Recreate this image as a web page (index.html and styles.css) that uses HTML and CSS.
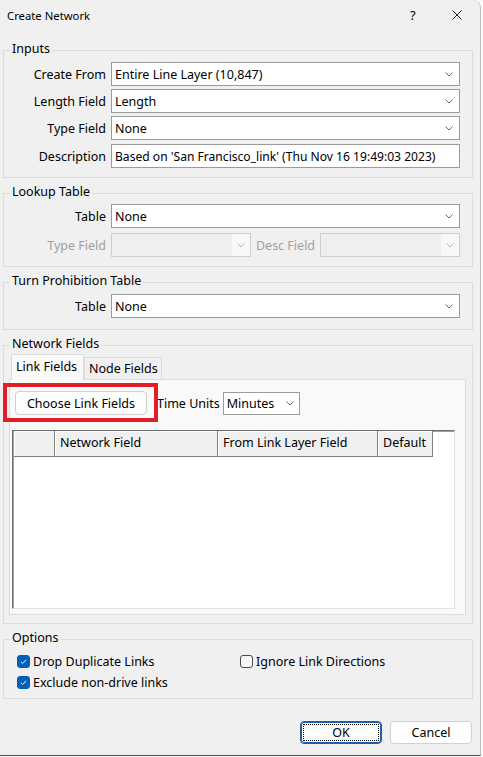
FILE: index.html
```html
<!DOCTYPE html>
<html>
<head>
<meta charset="utf-8">
<title>Create Network</title>
<link rel="stylesheet" href="styles.css">
</head>
<body>
<div class="window">
  <div class="titlebar">
    <span class="title">Create Network</span>
    <span class="help">?</span>
    <span class="close"><svg viewBox="0 0 10 10"><path d="M0.5 0.5 L9.5 9.5 M9.5 0.5 L0.5 9.5"/></svg></span>
  </div>
  <div class="content">
    <fieldset class="group g-inputs">
      <legend>Inputs</legend>
      <div class="form">
        <label>Create From</label>
        <div class="combo"><span class="val">Entire Line Layer (10,847)</span><svg class="chev" viewBox="0 0 8 5"><path d="M0.5 0.5 L4 4 L7.5 0.5"/></svg></div>
        <label>Length Field</label>
        <div class="combo"><span class="val">Length</span><svg class="chev" viewBox="0 0 8 5"><path d="M0.5 0.5 L4 4 L7.5 0.5"/></svg></div>
        <label>Type Field</label>
        <div class="combo"><span class="val">None</span><svg class="chev" viewBox="0 0 8 5"><path d="M0.5 0.5 L4 4 L7.5 0.5"/></svg></div>
        <label class="desc-label">Description</label>
        <div class="textbox desc-box">Based on 'San Francisco_link' (Thu Nov 16 19:49:03 2023)</div>
      </div>
    </fieldset>

    <fieldset class="group g-lookup">
      <legend>Lookup Table</legend>
      <div class="form form-lookup">
        <label>Table</label>
        <div class="combo"><span class="val">None</span><svg class="chev" viewBox="0 0 8 5"><path d="M0.5 0.5 L4 4 L7.5 0.5"/></svg></div>
        <label class="disabled">Type Field</label>
        <div class="split">
          <div class="combo off"><span class="val"></span><span class="arrow"><svg class="chev" viewBox="0 0 8 5"><path d="M0.5 0.5 L4 4 L7.5 0.5"/></svg></span></div>
          <span class="mid-label disabled">Desc Field</span>
          <div class="combo off"><span class="val"></span><span class="arrow"><svg class="chev" viewBox="0 0 8 5"><path d="M0.5 0.5 L4 4 L7.5 0.5"/></svg></span></div>
        </div>
      </div>
    </fieldset>

    <fieldset class="group g-turn">
      <legend>Turn Prohibition Table</legend>
      <div class="form">
        <label>Table</label>
        <div class="combo"><span class="val">None</span><svg class="chev" viewBox="0 0 8 5"><path d="M0.5 0.5 L4 4 L7.5 0.5"/></svg></div>
      </div>
    </fieldset>

    <fieldset class="group g-net">
      <legend>Network Fields</legend>
      <div class="tabs">
        <div class="tabbar">
          <div class="tab active">Link Fields</div>
          <div class="tab">Node Fields</div>
        </div>
        <div class="pane">
          <div class="toolbar">
            <div class="btn choose">Choose Link Fields</div>
            <span class="tu-label">Time Units</span>
            <div class="combo small"><span class="val">Minutes</span><svg class="chev" viewBox="0 0 8 5"><path d="M0.5 0.5 L4 4 L7.5 0.5"/></svg></div>
            <div class="highlight"></div>
          </div>
          <div class="grid">
            <div class="ghead">
              <div class="hcell c0"></div>
              <div class="hcell c1">Network Field</div>
              <div class="hcell c2">From Link Layer Field</div>
              <div class="hcell c3">Default</div>
            </div>
          </div>
        </div>
      </div>
    </fieldset>

    <fieldset class="group g-opts">
      <legend>Options</legend>
      <div class="opts">
        <div class="chk"><span class="box on"><svg viewBox="0 0 13 13"><path d="M3.5 6.8 L5.6 8.8 L9.6 4.4"/></svg></span><span>Drop Duplicate Links</span></div>
        <div class="chk"><span class="box"></span><span>Ignore Link Directions</span></div>
        <div class="chk"><span class="box on"><svg viewBox="0 0 13 13"><path d="M3.5 6.8 L5.6 8.8 L9.6 4.4"/></svg></span><span>Exclude non-drive links</span></div>
      </div>
    </fieldset>

    <div class="footer">
      <div class="btn ok">OK</div>
      <div class="btn cancel">Cancel</div>
    </div>
  </div>
</div>
</body>
</html>
```

FILE: styles.css
```css
* { box-sizing: border-box; }

body {
  margin: 0;
  background: #fafafa;
  font-family: "Noto Sans", "Open Sans", sans-serif;
  font-size: 12.5px;
  color: #000;
}

.window {
  width: 481px;
  height: 756px;
  background: #f0f0f0;
  border-right: 1px solid #bdbdbd;
  border-bottom: 1px solid #4d4d4d;
  border-top-right-radius: 8px;
  overflow: hidden;
}

.titlebar {
  height: 30px;
  display: flex;
  align-items: center;
  padding-left: 7px;
}
.title { flex: 1; font-size: 11.3px; }
.help { font-size: 13px; width: 10px; margin-right: 32px; }
.close { width: 10px; height: 10px; margin-right: 18px; display: flex; }
.close svg { width: 10px; height: 10px; fill: none; stroke: #222; stroke-width: 1; }

.content { padding: 12px 0 0 3px; }

.group {
  width: 470px;
  margin: 0 0 7px 0;
  padding: 0;
  border: 1px solid #dcdcdc;
  min-inline-size: 0;
}
.group legend {
  padding: 0 2px 2px 2px;
  margin-left: 6px;
  line-height: 14px;
  height: 16px;
}

.g-inputs .form { padding: 4px 0 9px 0; }
.g-lookup .form { padding: 3px 0 9px 0; row-gap: 5px; }
.g-turn .form { padding: 4px 0 11px 0; }

.form {
  display: grid;
  grid-template-columns: 102px 349px;
  column-gap: 5px;
  row-gap: 3px;
  align-items: center;
}
.form label { text-align: right; white-space: nowrap; }
.desc-label, .desc-box { margin-top: 1px; }
.desc-box { font-size: 12.1px; }
.disabled { color: #a0a0a0; }

.combo, .textbox {
  height: 24px;
  border: 1px solid #9b9b9b;
  background: #fff;
  display: flex;
  align-items: center;
  padding: 0 6px 0 3px;
  white-space: nowrap;
  overflow: hidden;
}
.combo .val { flex: 1; overflow: hidden; }
.chev { width: 8px; height: 5px; fill: none; stroke: #6a6a6a; stroke-width: 1; flex: none; }

.split { display: flex; align-items: center; }
.mid-label { flex: 1; text-align: center; }
.combo.off {
  width: 140px;
  border-color: #cdcdcd;
  background: #efefef;
  padding: 0;
}
.combo.off .arrow {
  width: 18px;
  height: 100%;
  background: #f8f8f8;
  display: flex;
  align-items: center;
  justify-content: center;
}
.combo.off .chev { stroke: #b8b8b8; }

/* Tabs */
.tabs { margin: 1px 6px 8px 5px; }
.tabbar {
  display: flex;
  align-items: flex-end;
  height: 25px;
  padding-left: 2px;
}
.tab {
  height: 22px;
  border: 1px solid #dcdcdc;
  border-bottom: none;
  background: #f0f0f0;
  padding: 0 0 0 4px;
  display: flex;
  align-items: center;
  width: 78px;
  white-space: nowrap;
}
.tab.active {
  width: 73px;
  height: 26px;
  margin-bottom: -1px;
  background: #f9f9f9;
  padding-bottom: 3px;
  position: relative;
  z-index: 1;
}
.pane {
  height: 236px;
  border: 1px solid #dcdcdc;
  background: #f9f9f9;
  padding-top: 11px;
}
.toolbar {
  position: relative;
  display: flex;
  align-items: center;
  height: 24px;
  padding-left: 5px;
}
.btn {
  height: 24px;
  border: 1px solid #d0d0d0;
  border-radius: 4px;
  background: #fdfdfd;
  display: flex;
  align-items: center;
  justify-content: center;
  white-space: nowrap;
}
.choose { width: 132px; }
.tu-label { margin-left: 10px; }
.combo.small { width: 77px; margin-left: 3px; height: 23px; padding-right: 5px; }
.highlight {
  position: absolute;
  left: -7px;
  top: -8px;
  width: 155px;
  height: 39px;
  border: 4px solid #e11d26;
  pointer-events: none;
}

.grid {
  margin: 15px 0 0 2px;
  width: 443px;
  height: 179px;
  background: #fff;
  border-top: 1px solid #6e6e6e;
  border-left: 1px solid #6e6e6e;
  border-right: 1px solid #e3e3e3;
  border-bottom: 1px solid #e3e3e3;
  box-shadow: inset 1px 1px 0 #a0a0a0;
}
.ghead { display: flex; margin-left: 1px; }
.hcell {
  height: 26px;
  background: #f0f0f0;
  border-right: 1px solid #808080;
  border-bottom: 1px solid #808080;
  box-shadow: inset 1px 1px 0 #ffffff;
  padding: 0 0 2px 5px;
  display: flex;
  align-items: center;
  white-space: nowrap;
}
.c0 { width: 41px; }
.c1 { width: 163px; }
.c2 { width: 160px; }
.c3 { width: 55px; }

/* Options */
.opts {
  display: grid;
  grid-template-columns: 223px auto;
  row-gap: 1px;
  padding: 4px 0 6px 13px;
}
.chk { display: flex; align-items: center; height: 20px; white-space: nowrap; }
.box {
  width: 13px;
  height: 13px;
  border-radius: 3px;
  border: 1px solid #4a4a4a;
  background: #f6f6f6;
  margin-right: 3px;
  display: flex;
  flex: none;
}
.box.on { background: #005fb8; border-color: #005fb8; }
.box svg { width: 11px; height: 11px; fill: none; stroke: #fff; stroke-width: 1.1; }

.footer {
  width: 469px;
  display: flex;
  justify-content: flex-end;
  gap: 8px;
  margin-top: 22px;
}
.ok, .cancel { width: 82px; height: 23px; }
.ok {
  border: 1px solid #1f5ea8;
  box-shadow: inset 0 0 0 1px #1f5ea8;
  outline: 1px dotted #000;
  outline-offset: -4px;
}
```
